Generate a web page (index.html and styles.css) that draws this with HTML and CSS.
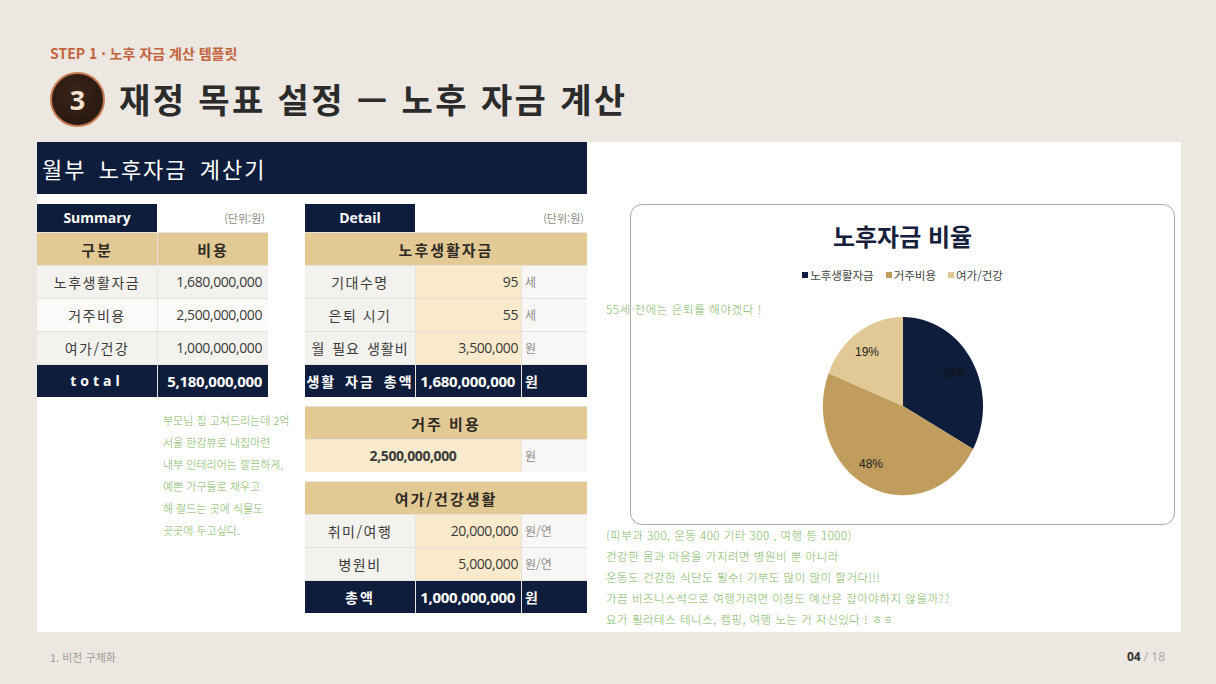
FILE: index.html
```html
<!DOCTYPE html>
<html lang="ko">
<head>
<meta charset="utf-8">
<title>재정 목표 설정 — 노후 자금 계산</title>
<link rel="stylesheet" href="styles.css">
</head>
<body>
<div class="slide">
  <div class="step">STEP 1 · 노후 자금 계산 템플릿</div>
  <div class="title-row">
    <div class="badge">3</div>
    <h1 class="title">재정 목표 설정 — 노후 자금 계산</h1>
  </div>

  <div class="panel">
    <div class="banner">월부 노후자금 계산기</div>

    <div class="left">
      <div class="summary">
        <div class="tbl-head">
          <div class="tag tag-sum">Summary</div>
          <div class="unit-note">(단위:원)</div>
        </div>
        <div class="grid sum-grid">
          <div class="c th">구분</div><div class="c th">비용</div>
          <div class="c lab r1">노후생활자금</div><div class="c num r1">1,680,000,000</div>
          <div class="c lab r2">거주비용</div><div class="c num r2">2,500,000,000</div>
          <div class="c lab r1">여가/건강</div><div class="c num r1">1,000,000,000</div>
          <div class="c tot total-word">total</div><div class="c tot num bignum">5,180,000,000</div>
        </div>
        <div class="hand note-left">
          <div>부모님 집 고쳐드리는데 2억</div>
          <div>서울 한강뷰로 내집마련</div>
          <div>내부 인테리어는 깔끔하게,</div>
          <div>예쁜 가구들로 채우고</div>
          <div>해 잘드는 곳에 식물도</div>
          <div>곳곳에 두고싶다.</div>
        </div>
      </div>

      <div class="detail">
        <div class="tbl-head">
          <div class="tag tag-det">Detail</div>
          <div class="unit-note">(단위:원)</div>
        </div>
        <div class="grid det-grid">
          <div class="c th span3">노후생활자금</div>
          <div class="c lab">기대수명</div><div class="c val">95</div><div class="c unit">세</div>
          <div class="c lab">은퇴 시기</div><div class="c val">55</div><div class="c unit">세</div>
          <div class="c lab lab-tight">월 필요 생활비</div><div class="c val">3,500,000</div><div class="c unit">원</div>
          <div class="c tot tot-lab">생활 자금 총액</div><div class="c tot num bignum">1,680,000,000</div><div class="c tot unit-w">원</div>
        </div>

        <div class="grid det-grid block">
          <div class="c th span3">거주 비용</div>
          <div class="c val span2 center-val">2,500,000,000</div><div class="c unit">원</div>
        </div>

        <div class="grid det-grid block">
          <div class="c th span3">여가/건강생활</div>
          <div class="c lab">취미/여행</div><div class="c val">20,000,000</div><div class="c unit">원/연</div>
          <div class="c lab">병원비</div><div class="c val">5,000,000</div><div class="c unit">원/연</div>
          <div class="c tot tot-lab">총액</div><div class="c tot num bignum">1,000,000,000</div><div class="c tot unit-w">원</div>
        </div>
      </div>
    </div>

    <div class="right">
      <div class="chart-box">
        <div class="chart-title">노후자금 비율</div>
        <div class="legend">
          <span class="lg"><i class="sw sw-navy"></i>노후생활자금</span>
          <span class="lg"><i class="sw sw-tan"></i>거주비용</span>
          <span class="lg"><i class="sw sw-light"></i>여가/건강</span>
        </div>
        <svg class="pie" width="170" height="180" viewBox="0 0 170 180">
          <path d="M85,90 L85,1 A80,89 0 0 1 155.1,132.9 Z" fill="#0f1d3c"/>
          <path d="M85,90 L155.1,132.9 A80,89 0 0 1 10.6,57.2 Z" fill="#c09d5c"/>
          <path d="M85,90 L10.6,57.2 A80,89 0 0 1 85,1 Z" fill="#e1c894"/>
          <text x="49" y="40" class="pct" text-anchor="middle">19%</text>
          <text x="136" y="61" class="pct pct-dark" text-anchor="middle">33%</text>
          <text x="53" y="152" class="pct" text-anchor="middle">48%</text>
        </svg>
      </div>
      <div class="hand note-side">55세 전에는 은퇴를 해야겠다 !</div>
      <div class="hand note-bottom">
        <div>(피부과 300, 운동 400 기타 300 , 여행 등 1000)</div>
        <div>건강한 몸과 마음을 가지려면 병원비 뿐 아니라</div>
        <div>운동도 건강한 식단도 필수! 기부도 많이 많이 할거다!!!</div>
        <div>가끔 비즈니스석으로 여행가려면 이정도 예산은 잡아야하지 않을까??</div>
        <div>요가 필라테스 테니스, 캠핑, 여행 노는 거 자신있다 ! ㅎㅎ</div>
      </div>
    </div>
  </div>

  <div class="footer">
    <span class="foot-left">1. 비전 구체화</span>
    <span class="foot-right"><b>04</b> / 18</span>
  </div>
</div>
</body>
</html>
```
FILE: styles.css
```css
* { box-sizing: border-box; }
body {
  margin: 0;
  width: 1216px;
  height: 684px;
  overflow: hidden;
  background: #ece7e1;
  font-family: "Noto Sans CJK KR", "Noto Sans", sans-serif;
  color: #333;
}
.slide { padding: 43px 35px 0 37px; }

.step {
  margin-left: 13px;
  font: 700 14px/20px "Noto Sans CJK KR", "Open Sans", sans-serif;
  color: #c2643d;
}
.title-row {
  display: flex;
  align-items: center;
  gap: 14px;
  margin: 9px 0 0 13px;
  height: 54px;
}
.badge {
  width: 55px;
  height: 55px;
  border-radius: 50%;
  border: 2px solid #c97b4f;
  background: radial-gradient(circle at 45% 40%, #3a2418, #23150e);
  color: #f3e2cf;
  font: 700 27px/1 "Open Sans", "Noto Sans", sans-serif;
  display: flex;
  align-items: center;
  justify-content: center;
}
.title {
  margin: 0;
  font: 700 34px/1 "Noto Sans CJK KR", sans-serif;
  color: #2b2b2b;
  letter-spacing: 2.4px;
}

.panel {
  margin-top: 16px;
  width: 1144px;
  height: 490px;
  background: #fff;
  display: grid;
  grid-template-columns: 550px 594px;
  grid-template-rows: 52px 438px;
}
.banner {
  grid-column: 1;
  grid-row: 1;
  background: #0f1d3c;
  color: #fff;
  font: 400 22px/1 "Noto Sans CJK KR", sans-serif;
  letter-spacing: 2px;
  word-spacing: 4px;
  padding-left: 5px;
  display: flex;
  align-items: center;
}
.left {
  grid-column: 1;
  grid-row: 2;
  display: flex;
  gap: 37px;
  padding-top: 10px;
}
.summary { width: 231px; }
.detail { width: 282px; }

.tbl-head {
  display: flex;
  height: 28px;
  align-items: stretch;
}
.tag {
  background: #0f1d3c;
  color: #fff;
  font: 700 14px/28px "Open Sans", "Noto Sans CJK KR", sans-serif;
  text-align: center;
}
.tag-sum { width: 120px; }
.tag-det { width: 110px; }
.unit-note {
  flex: 1;
  text-align: right;
  font: 400 11px/28px "Noto Sans CJK KR", sans-serif;
  color: #8a8a8a;
  padding-right: 3px;
}

.grid {
  display: grid;
  gap: 1px;
  background: #e7e3dc;
  grid-auto-rows: 32px;
}
.sum-grid { grid-template-columns: 120px 110px; border-top: 1px solid #e7e3dc; }
.det-grid { grid-template-columns: 110px 105px 65px; border-top: 1px solid #e7e3dc; }
.block { margin-top: 9px; }

.c {
  display: flex;
  align-items: center;
  font: 400 14px/1 "Noto Sans CJK KR", sans-serif;
  color: #3a3a3a;
}
.th {
  background: #e3c994;
  justify-content: center;
  font-weight: 700;
  font-size: 15px;
  letter-spacing: 2px;
  color: #2e2a24;
}
.span3 { grid-column: span 3; }
.span2 { grid-column: span 2; }
.lab {
  background: #f4f2ee;
  justify-content: center;
  letter-spacing: 1.5px;
}
.lab-tight { letter-spacing: 1px; word-spacing: 2px; }
.r1 { background: #f4f2ee; }
.r2 { background: #fbfaf8; }
.num {
  justify-content: flex-end;
  padding-right: 6px;
  font: 400 14px/1 "Open Sans", sans-serif;
  letter-spacing: -0.4px;
}
.val {
  background: #f9eacb;
  justify-content: flex-end;
  padding-right: 3px;
  font: 400 14px/1 "Open Sans", sans-serif;
  letter-spacing: -0.4px;
  color: #3a3a3a;
}
.center-val {
  justify-content: center;
  font-weight: 700;
  padding-right: 0;
}
.unit {
  background: #f8f7f5;
  padding-left: 3px;
  font-size: 12px;
  color: #8c8c8c;
}
.tot {
  background: #0f1d3c;
  color: #fff;
}
.total-word {
  justify-content: center;
  font: 700 14px/1 "Open Sans", sans-serif;
  letter-spacing: 4px;
}
.tot-lab {
  justify-content: center;
  font-weight: 700;
  letter-spacing: 2px;
  word-spacing: 3px;
}
.bignum {
  font: 700 15px/1 "Open Sans", sans-serif;
  color: #fff;
  letter-spacing: -0.3px;
}
.unit-w {
  padding-left: 3px;
  font-weight: 700;
  font-size: 14px;
}

.hand {
  color: #7fb566;
  font: 300 11px/22px "Noto Sans CJK KR", sans-serif;
  white-space: nowrap;
}
.note-left { margin-top: 12px; padding-left: 126px; }

.right {
  grid-column: 2;
  grid-row: 1 / span 2;
  padding: 62px 0 0 19px;
  position: relative;
}
.chart-box {
  margin-left: 24px;
  width: 545px;
  height: 321px;
  border: 1.5px solid #a9a9a9;
  border-radius: 12px;
  background: #fff;
  display: flex;
  flex-direction: column;
  align-items: center;
}
.chart-title {
  margin-top: 15px;
  font: 700 24px/32px "Noto Sans CJK KR", sans-serif;
  color: #16203a;
}
.legend {
  margin-top: 15px;
  display: flex;
  gap: 12px;
  font: 400 11.5px/16px "Noto Sans CJK KR", sans-serif;
  color: #444;
}
.lg { display: flex; align-items: center; }
.sw { display: inline-block; width: 6px; height: 6px; margin-right: 2px; }
.sw-navy { background: #0f1d3c; }
.sw-tan { background: #c09d5c; }
.sw-light { background: #e1c894; }
.pie { margin-top: 33px; }
.pct { font: 400 12px "Liberation Sans", Arial, sans-serif; fill: #222; }
.pct-dark { fill: #111; }

.note-side {
  position: absolute;
  left: 19px;
  top: 159px;
  line-height: 16px;
  font-size: 11.5px;
  letter-spacing: 0.6px;
}
.note-bottom {
  line-height: 21px;
  font-size: 11.5px;
  letter-spacing: 0.5px;
}

.footer {
  display: flex;
  justify-content: space-between;
  padding: 16px 16px 0 13px;
  font: 400 11px/18px "Noto Sans CJK KR", sans-serif;
  color: #a29c95;
}
.foot-right { font-family: "Open Sans", sans-serif; font-size: 12px; color: #aaa; }
.foot-right b { color: #333; font-weight: 700; }
```
